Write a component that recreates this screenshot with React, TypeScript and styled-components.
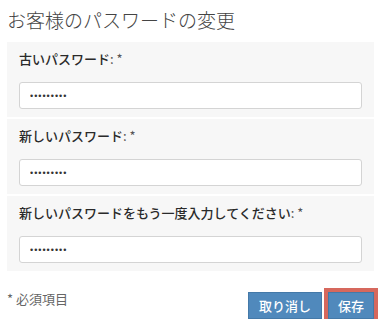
import styled, { createGlobalStyle } from "styled-components";

const GlobalStyle = createGlobalStyle`
    body {
        margin: 0;
        background: #fff;
        font-family: "Noto Sans CJK JP", "Liberation Sans", sans-serif;
        color: #333;
    }
`;

const fields = [
    "古いパスワード",
    "新しいパスワード",
    "新しいパスワードをもう一度入力してください",
];

export default function App() {
    return (
        <>
            <GlobalStyle/>
            <Page>
                <Title>お客様のパスワードの変更</Title>
                <Panel>
                    {fields.map((label) => (
                        <Field key={label}>
                            <Label>{label}<Required>: *</Required></Label>
                            <Input type="password" defaultValue="123456789" readOnly/>
                        </Field>
                    ))}
                </Panel>
                <Footer>
                    <Note>* 必須項目</Note>
                    <Buttons>
                        <Button $pad="10px">取り消し</Button>
                        <Button $pad="9px" $highlight>保存</Button>
                    </Buttons>
                </Footer>
            </Page>
        </>
    );
}

const Page = styled.div`
    width: 367px;
    padding: 6px 0 0 7px;
`;

const Title = styled.h1`
    margin: 0 0 8px;
    font-size: 19px;
    line-height: 28px;
    font-weight: 300;
    color: #444;
`;

const Panel = styled.div`
    background: #f7f7f7;
`;

const Field = styled.div`
    display: flex;
    flex-direction: column;
    padding: 7px 12px 8px;

    & + & {
        border-top: 2px solid #fff;
    }
`;

const Label = styled.label`
    font-size: 13px;
    line-height: 20px;
    font-weight: 500;
    color: #2a2a2a;
    margin-bottom: 13px;
`;

const Required = styled.span`
    font-weight: 400;
    color: #555;
`;

const Input = styled.input`
    box-sizing: border-box;
    width: 343px;
    height: 27px;
    padding: 0 10px;
    border: 1px solid #d4d4d4;
    border-radius: 3px;
    background: #fff;
    font-size: 9px;
    letter-spacing: 1px;
    color: #333;
    outline: none;
`;

const Footer = styled.div`
    display: flex;
    justify-content: space-between;
    align-items: flex-start;
    padding-top: 18px;
`;

const Note = styled.span`
    font-size: 13px;
    line-height: 20px;
    color: #666;
`;

const Buttons = styled.div`
    display: flex;
    gap: 6px;
    margin-top: 3px;
`;

const Button = styled.button<{ $pad: string; $highlight?: boolean }>`
    height: 27px;
    padding: 0 ${(p) => p.$pad};
    border: 1px solid #4479a8;
    background: #5089bc;
    color: #fff;
    font-family: inherit;
    font-size: 13px;
    font-weight: 500;
    line-height: 25px;
    outline: ${(p) => (p.$highlight ? "4px solid #d6685d" : "none")};
    cursor: pointer;
`;
